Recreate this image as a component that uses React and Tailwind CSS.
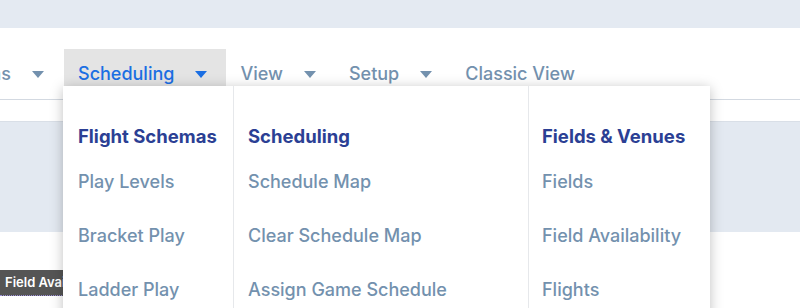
import React from 'react';

const Caret = ({ active }) => (
  <svg width="12" height="7" viewBox="0 0 12 7" className="shrink-0">
    <path d="M0 0 L12 0 L6 7 Z" fill={active ? '#1b6fe3' : '#7391ae'} />
  </svg>
);

const NavItem = ({ label, caret = true, active = false }) => (
  <div
    className={`flex items-center h-[50px] pl-[14px] pr-[19px] gap-[21px] ${active ? 'bg-[#e4e4e4] text-[#1b6fe3]' : 'text-[#7391ae]'}`}
  >
    <span className="text-[18px] font-medium leading-none whitespace-nowrap">{label}</span>
    {caret && <Caret active={active} />}
  </div>
);

const columns = [
  { title: 'Flight Schemas', cls: 'w-[171px] pl-[15px]', items: ['Play Levels', 'Bracket Play', 'Ladder Play'] },
  { title: 'Scheduling', cls: 'w-[295px] pl-[14px]', items: ['Schedule Map', 'Clear Schedule Map', 'Assign Game Schedule'] },
  { title: 'Fields & Venues', cls: 'flex-1 pl-[13px]', items: ['Fields', 'Field Availability', 'Flights'] },
];

export default function App() {
  return (
    <div className="relative w-[800px] h-[308px] overflow-hidden bg-white" style={{ fontFamily: 'Inter, "Noto Sans", sans-serif' }}>
      {/* top band */}
      <div className="h-[28px] bg-[#e4eaf2]" />

      {/* nav bar */}
      <div className="h-[72px] border-b border-[#d3d9e1] flex items-end">
        <div className="w-[63px] overflow-hidden flex justify-end">
          <NavItem label="Teams" />
        </div>
        <div className="w-px" />
        <NavItem label="Scheduling" active />
        <NavItem label="View" />
        <NavItem label="Setup" />
        <NavItem label="Classic View" caret={false} />
      </div>

      {/* page content */}
      <div className="h-[21px]" />
      <div className="h-[111px] bg-[#e3e9f1] border-t border-[#d9dfe7]" />

      {/* tooltip */}
      <div className="absolute left-0 top-[270px] h-[26px] w-[120px] bg-[#555555] text-white text-[13px] font-semibold flex items-center pl-[5px] border-b border-dotted border-[#9b8fd8]">
        Field Availability
      </div>

      {/* dropdown */}
      <div className="absolute left-[63px] top-[86px] w-[647px] h-[240px] bg-white shadow-[0_2px_12px_rgba(0,0,0,0.25)] flex">
        {columns.map((col, i) => (
          <div
            key={col.title}
            className={`${col.cls} pt-[38px] ${i < 2 ? 'border-r border-[#e6e8eb]' : ''}`}
          >
            <div className="text-[18.5px] font-bold text-[#2b3f94] leading-[24px] whitespace-nowrap">{col.title}</div>
            <div className="flex flex-col mt-[22px] gap-[30px]">
              {col.items.map((it) => (
                <div key={it} className="text-[18px] font-medium text-[#7391ae] leading-[24px] whitespace-nowrap">{it}</div>
              ))}
            </div>
          </div>
        ))}
      </div>
    </div>
  );
}
